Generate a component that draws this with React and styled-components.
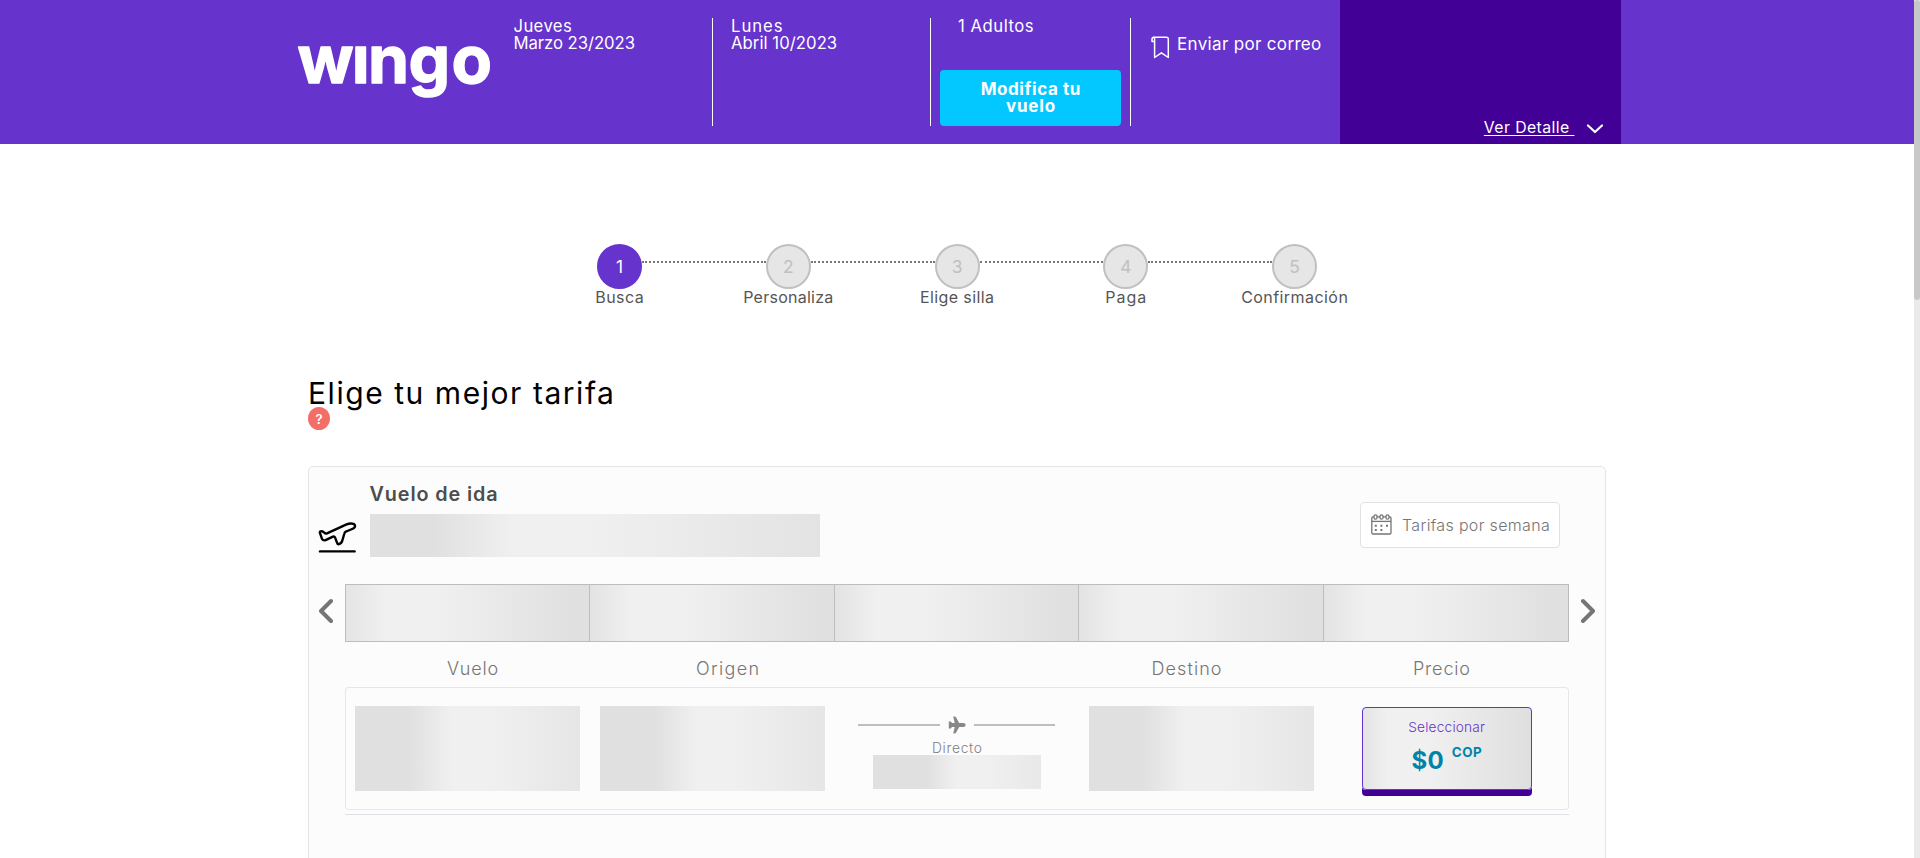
import React from "react";
import styled, { createGlobalStyle } from "styled-components";

const GlobalStyle = createGlobalStyle`
  * { box-sizing: border-box; }
  html, body { margin: 0; background: #fff; }
  body { font-family: Inter, "Liberation Sans", sans-serif; overflow: hidden; }
  svg { display: block; flex: none; }
  p, h1, h2, ol { margin: 0; padding: 0; }
`;

const Page = styled.div`
  display: flex;
  height: 858px;
  overflow: hidden;
`;

const Content = styled.div`
  flex: 1;
  min-width: 0;
`;

const ScrollTrack = styled.div`
  width: 6px;
  background: #e8eaeb;
`;

const ScrollThumb = styled.div`
  height: 300px;
  border-radius: 3px;
  background: #c6c8c9;
`;

const Label = styled.span`
  display: inline-block;
  white-space: pre;
  letter-spacing: ${(p) => p.$track || 0}px;
  margin-right: ${(p) => -(p.$track || 0)}px;
`;

/* ---------- Header ---------- */

const Header = styled.header`
  height: 144px;
  background: #6633cc;
  color: #fff;
`;

const HeaderInner = styled.div`
  display: flex;
  width: 1328px;
  height: 100%;
  margin: 0 auto;
`;

const LogoLink = styled.div`
  width: 219px;
  padding: 10px 0 0;
`;

const TripBlock = styled.div`
  width: ${(p) => p.$width}px;
  height: 108px;
  margin-top: 18px;
  padding-left: ${(p) => p.$inset}px;
  border-right: 1px solid #fff;
  display: flex;
  flex-direction: column;
  align-items: flex-start;
  font-size: 16.7px;
  line-height: 17px;
`;

const ModifyButton = styled.button`
  width: 181px;
  height: 56px;
  margin: auto 0 0 -18px;
  padding: 0;
  border: 0;
  border-radius: 4px;
  background: #03c8ff;
  color: #fff;
  font: 700 17px/17px Inter, sans-serif;
  display: flex;
  flex-direction: column;
  align-items: center;
  justify-content: center;
`;

const MailLink = styled.div`
  width: 209px;
  padding: 35px 0 0 20px;
  display: flex;
  gap: 6px;
  font-size: 17px;
  line-height: 18px;
`;

const TotalPanel = styled.div`
  width: 281px;
  padding: 0 18px 7px 0;
  background: #420096;
  display: flex;
  justify-content: flex-end;
  align-items: flex-end;
  gap: 11px;
  font-size: 15.8px;
  line-height: 18px;
`;

const DetailLabel = styled(Label)`
  text-decoration: underline;
  text-decoration-thickness: 1px;
  text-underline-offset: 2px;
`;

/* ---------- Steps ---------- */

const Steps = styled.ol`
  display: grid;
  grid-template-columns: repeat(5, 168.75px);
  justify-content: center;
  margin-top: 100px;
  list-style: none;
`;

const Step = styled.li`
  display: flex;
  flex-direction: column;
  align-items: center;
  color: #555;
  font-size: 16px;
  line-height: 18px;
`;

const StepTrack = styled.div`
  align-self: stretch;
  display: flex;
  justify-content: center;
  padding-left: 61.875px;
  margin-right: -61.875px;
`;

const StepLine = styled.div`
  flex: 1;
  height: 2px;
  margin-top: 17px;
  border-top: 2px dotted ${(p) => (p.$hidden ? "transparent" : "#777")};
`;

const StepCircle = styled.div`
  width: 45px;
  height: 45px;
  margin-bottom: -1px;
  border-radius: 50%;
  border: 2px solid ${(p) => (p.$active ? "#6633cc" : "#c0c0c0")};
  background: ${(p) => (p.$active ? "#6633cc" : "#e6e6e6")};
  color: ${(p) => (p.$active ? "#fff" : "#c0c0c0")};
  display: flex;
  align-items: center;
  justify-content: center;
  font-size: 17.4px;
`;

/* ---------- Fare card ---------- */

const Main = styled.main`
  width: 1298px;
  margin: 72px auto 0;
`;

const Title = styled.h1`
  font-size: 30px;
  line-height: 30px;
  font-weight: 400;
  color: #000;
`;

const HelpBadge = styled.div`
  width: 22px;
  height: 23px;
  margin-top: -1px;
  border-radius: 50%;
  background: #f36e67;
  color: #fff;
  display: flex;
  align-items: center;
  justify-content: center;
  font-size: 13px;
  font-weight: 600;
`;

const Card = styled.section`
  height: 460px;
  margin-top: 36px;
  border: 1px solid #e5e5e5;
  border-radius: 5px;
  background: #fcfcfc;
`;

const CardHead = styled.div`
  display: flex;
  height: 117px;
  padding: 15px 45px 0 9px;
`;

const TakeoffBox = styled.div`
  width: 52px;
  padding-top: 40px;
`;

const CardTitle = styled.h2`
  margin: 0 0 8px -0.5px;
  font-size: 19.8px;
  line-height: 24px;
  font-weight: 600;
  color: #4d4d4d;
`;

const tones = {
  wide: "#e0e0e0 14%, #f0f0f0 32%, #f0f0f0 48%, #e3e3e3 100%",
  dateFirst: "#e4e4e4 0%, #f0f0f0 16%, #f0f0f0 38%, #e0e0e0 94%",
  date: "#e3e3e3 0%, #f0f0f0 17%, #f0f0f0 38%, #e0e0e0 94%",
  box: "#e0e0e0 24%, #f0f0f0 43%, #f0f0f0 60%, #e6e6e6 100%",
  small: "#e0e0e0 32%, #f0f0f0 50%, #f0f0f0 68%, #e8e8e8 100%",
};

const Skeleton = styled.div`
  width: ${(p) => p.$width}px;
  height: ${(p) => p.$height}px;
  background: linear-gradient(to right, ${(p) => tones[p.$tone]});
`;

const WeekButton = styled.button`
  width: 200px;
  height: 46px;
  margin: 20px 0 0 auto;
  padding: 0 0 0 10px;
  border: 1px solid #e2e2e2;
  border-radius: 4px;
  background: #fff;
  color: #757575;
  font: 300 16px/20px Inter, sans-serif;
  display: flex;
  align-items: center;
  gap: 10px;

  svg { margin-bottom: 2px; }
`;

const DateRow = styled.div`
  display: flex;
  align-items: center;
  padding: 0 10px;
`;

const ArrowBox = styled.div`
  width: 26px;
  padding-bottom: 4px;
  display: flex;
  justify-content: ${(p) => p.$side};
`;

const DateStrip = styled.div`
  flex: 1;
  display: grid;
  grid-template-columns: repeat(5, 1fr);
  height: 58px;
  border: solid #bdbdbd;
  border-width: 1px 0;
`;

const DateCell = styled.div`
  border-right: 1px solid #bdbdbd;
  background: linear-gradient(to right, ${(p) => tones[p.$tone]});
  &:first-child { border-left: 1px solid #bdbdbd; }
`;

const Columns = styled.div`
  display: grid;
  grid-template-columns: 255px 255px 204px 255px 255px;
  margin: 17px 36px 8px;
  height: 20px;
  color: #757575;
  font-size: 18px;
  line-height: 20px;
  font-weight: 300;
  text-align: center;
`;

const FlightRow = styled.div`
  display: grid;
  grid-template-columns: repeat(5, 1fr);
  justify-items: center;
  height: 123px;
  margin: 0 36px;
  padding-top: 19px;
  box-shadow: inset 0 0 0 1px #e7e7e7;
  border-radius: 4px;
`;

const Route = styled.div`
  width: 197px;
  padding-top: 10px;
  display: flex;
  flex-direction: column;
  align-items: center;
  color: #808080;
  font-size: 13.8px;
  line-height: 16px;
  font-weight: 300;
`;

const RouteLine = styled.div`
  align-self: stretch;
  display: flex;
  align-items: center;
  justify-content: space-between;
  margin-bottom: 6px;
`;

const Dash = styled.div`
  width: 81.5px;
  height: 2px;
  background: #bebebe;
`;

const DirectLabel = styled(Label)`
  margin-bottom: -1px;
`;

const PriceButton = styled.button`
  width: 170px;
  height: 83px;
  margin: 1px 0 0;
  padding: 11px 0 0;
  border: 1px solid #6633cc;
  border-radius: 4px;
  background: linear-gradient(to right, #e4e4e4 0%, #f0f0f0 15%, #f0f0f0 38%, #dfdfdf 100%);
  box-shadow: 0 6px 0 #420096;
  display: flex;
  flex-direction: column;
  align-items: center;
  color: #6633cc;
  font: 300 13.7px/16px Inter, sans-serif;
`;

const Price = styled.div`
  display: flex;
  align-items: flex-start;
  gap: 8px;
  padding-top: 9px;
  color: #0083a8;
  font-weight: 700;
  font-size: 24px;
  line-height: 34px;
`;

const Currency = styled(Label)`
  font-size: 13.4px;
  line-height: 16px;
`;

const Divider = styled.div`
  height: 1px;
  margin: 4px 36px 0;
  background: #dfe0e6;
`;

/* ---------- Drawings ---------- */

const Logo = () => (
  <svg width="208" height="100" viewBox="0 0 208 100" role="img" aria-label="wingo">
    <text
      x="4.4 58.8 75 115.4 158.6"
      y="72.7"
      fill="#fff"
      stroke="#fff"
      strokeWidth="1.3"
      strokeLinejoin="round"
      fontFamily="Inter"
      fontWeight="700"
      fontSize="66"
    >
      wıngo
    </text>
  </svg>
);

const BookmarkIcon = () => (
  <svg width="20" height="24" viewBox="0 0 20 24" fill="none" stroke="#fff" strokeWidth="1.5" strokeLinejoin="round" strokeLinecap="round">
    <path d="M3.5 6.5H1V4Q1 2.2 3 2.2H15.5Q17.3 2.2 17.3 4V22.5L10.4 17.8L3.6 22.5V4Q3.6 2.6 2.6 2.3" />
  </svg>
);

const Chevron = ({ w, h, d, color = "#757575", stroke = 4 }) => (
  <svg width={w} height={h} viewBox={`0 0 ${w} ${h}`} fill="none" stroke={color} strokeWidth={stroke} strokeLinecap="round" strokeLinejoin="round">
    <path d={d} />
  </svg>
);

const TakeoffIcon = () => (
  <svg width="39" height="32" viewBox="0 0 39 32" fill="none" stroke="#000" strokeWidth="2.4" strokeLinejoin="round" strokeLinecap="round">
    <path d="M2 11.2Q1.4 9.2 3.4 9.2Q4.8 9 5.8 10.3Q7 11.9 9 11.3L28 2.6Q32.5 0.9 35.5 1.9Q38.4 3.6 36 6Q34 7.2 27.8 9.6Q26.6 10.2 26.2 12L24.2 19Q23 22 20.4 22.2Q19.4 22 19 20.6L17 15.4Q16.4 14.2 15 14.6L7.5 18.2Q5.2 18.8 4 16.8Z" />
    <path d="M2 29.4H36.6" />
  </svg>
);

const CalendarIcon = () => (
  <svg width="21" height="21" viewBox="0 0 21 21" fill="none" stroke="#757575" strokeWidth="1.3">
    <rect x="0.8" y="2.8" width="19.2" height="17.2" rx="1.2" />
    <path d="M0.8 7.4H20" />
    <g fill="#fff">
      <rect x="3" y="0.8" width="3" height="4.4" rx="1.5" />
      <rect x="9" y="0.8" width="3" height="4.4" rx="1.5" />
      <rect x="15" y="0.8" width="3" height="4.4" rx="1.5" />
    </g>
    <path strokeWidth="2" d="M3.8 11.8h2M9.4 11.8h2M15 11.8h2M3.8 16h2M9.4 16h2" />
  </svg>
);

const PlaneIcon = () => (
  <svg width="18" height="18" viewBox="0 0 18 18" fill="#888">
    <path d="M11.2 7H15.4Q17.6 7.2 17.6 9T15.4 11H11.2L8 16.8Q7.6 17.6 6.8 17.6H5.2L6.7 11H4L2.7 12.4Q2.3 12.8 1.6 12.6L0.8 12.2V5.8L1.6 5.4Q2.3 5.2 2.7 5.6L4 7H6.7L5.2 0.4H6.8Q7.6 0.4 8 1.2Z" />
  </svg>
);

/* ---------- Data ---------- */

const steps = [
  { name: "Busca", track: 0.4 },
  { name: "Personaliza", track: 0.27 },
  { name: "Elige silla", track: 0.37 },
  { name: "Paga", track: 1 },
  { name: "Confirmación", track: 0.44 },
];

const columns = [
  { name: "Vuelo", track: 0.8 },
  { name: "Origen", track: 1.35 },
  { name: "", track: 0 },
  { name: "Destino", track: 1.1 },
  { name: "Precio", track: 0.85 },
];

export default function App() {
  return (
    <>
      <GlobalStyle />
      <Page>
        <Content>
          <Header>
            <HeaderInner>
              <LogoLink><Logo /></LogoLink>
              <TripBlock $width={201} $inset={1.5}>
                <Label $track={0.36}>Jueves</Label>
                <Label $track={-0.05}>Marzo 23/2023</Label>
              </TripBlock>
              <TripBlock $width={218} $inset={18}>
                <Label $track={0.95}>Lunes</Label>
                <Label $track={0.05}>Abril 10/2023</Label>
              </TripBlock>
              <TripBlock $width={200} $inset={27}>
                <Label $track={0.52}>1 Adultos</Label>
                <ModifyButton>
                  <Label $track={0.56}>Modifica tu</Label>
                  <Label $track={0.8}>vuelo</Label>
                </ModifyButton>
              </TripBlock>
              <MailLink>
                <BookmarkIcon />
                <Label $track={0.33}>Enviar por correo</Label>
              </MailLink>
              <TotalPanel>
                <DetailLabel $track={0.4}>{"Ver Detalle "}</DetailLabel>
                <Chevron w={18} h={18} d="M3 6.5L10 13L17 6.5" color="#fff" stroke={2.2} />
              </TotalPanel>
            </HeaderInner>
          </Header>

          <Steps>
            {steps.map((s, i) => (
              <Step key={s.name}>
                <StepTrack>
                  <StepCircle $active={i === 0}>{i + 1}</StepCircle>
                  <StepLine $hidden={i === steps.length - 1} />
                </StepTrack>
                <Label $track={s.track}>{s.name}</Label>
              </Step>
            ))}
          </Steps>

          <Main>
            <Title><Label $track={1.55}>Elige tu mejor tarifa</Label></Title>
            <HelpBadge>?</HelpBadge>

            <Card>
              <CardHead>
                <TakeoffBox><TakeoffIcon /></TakeoffBox>
                <div>
                  <CardTitle><Label $track={0.9}>Vuelo de ida</Label></CardTitle>
                  <Skeleton $width={450} $height={43} $tone="wide" />
                </div>
                <WeekButton>
                  <CalendarIcon />
                  <Label $track={0.33}>Tarifas por semana</Label>
                </WeekButton>
              </CardHead>

              <DateRow>
                <ArrowBox $side="flex-start">
                  <Chevron w={15} h={26} d="M12 3L2 13L12 23" />
                </ArrowBox>
                <DateStrip>
                  {["dateFirst", "date", "date", "date", "date"].map((tone, i) => (
                    <DateCell key={i} $tone={tone} />
                  ))}
                </DateStrip>
                <ArrowBox $side="flex-end">
                  <Chevron w={15} h={26} d="M3 3L13 13L3 23" />
                </ArrowBox>
              </DateRow>

              <Columns>
                {columns.map((c, i) => (
                  <div key={i}>
                    <Label $track={c.track}>{c.name}</Label>
                  </div>
                ))}
              </Columns>

              <FlightRow>
                <Skeleton $width={225} $height={85} $tone="box" />
                <Skeleton $width={225} $height={85} $tone="box" />
                <Route>
                  <RouteLine>
                    <Dash />
                    <PlaneIcon />
                    <Dash />
                  </RouteLine>
                  <DirectLabel $track={0.7}>Directo</DirectLabel>
                  <Skeleton $width={168} $height={34} $tone="small" />
                </Route>
                <Skeleton $width={225} $height={85} $tone="box" />
                <PriceButton>
                  <Label $track={0.2}>Seleccionar</Label>
                  <Price>
                    <Label $track={0.3}>$0</Label>
                    <Currency $track={0.5}>COP</Currency>
                  </Price>
                </PriceButton>
              </FlightRow>
              <Divider />
            </Card>
          </Main>
        </Content>
        <ScrollTrack>
          <ScrollThumb />
        </ScrollTrack>
      </Page>
    </>
  );
}
